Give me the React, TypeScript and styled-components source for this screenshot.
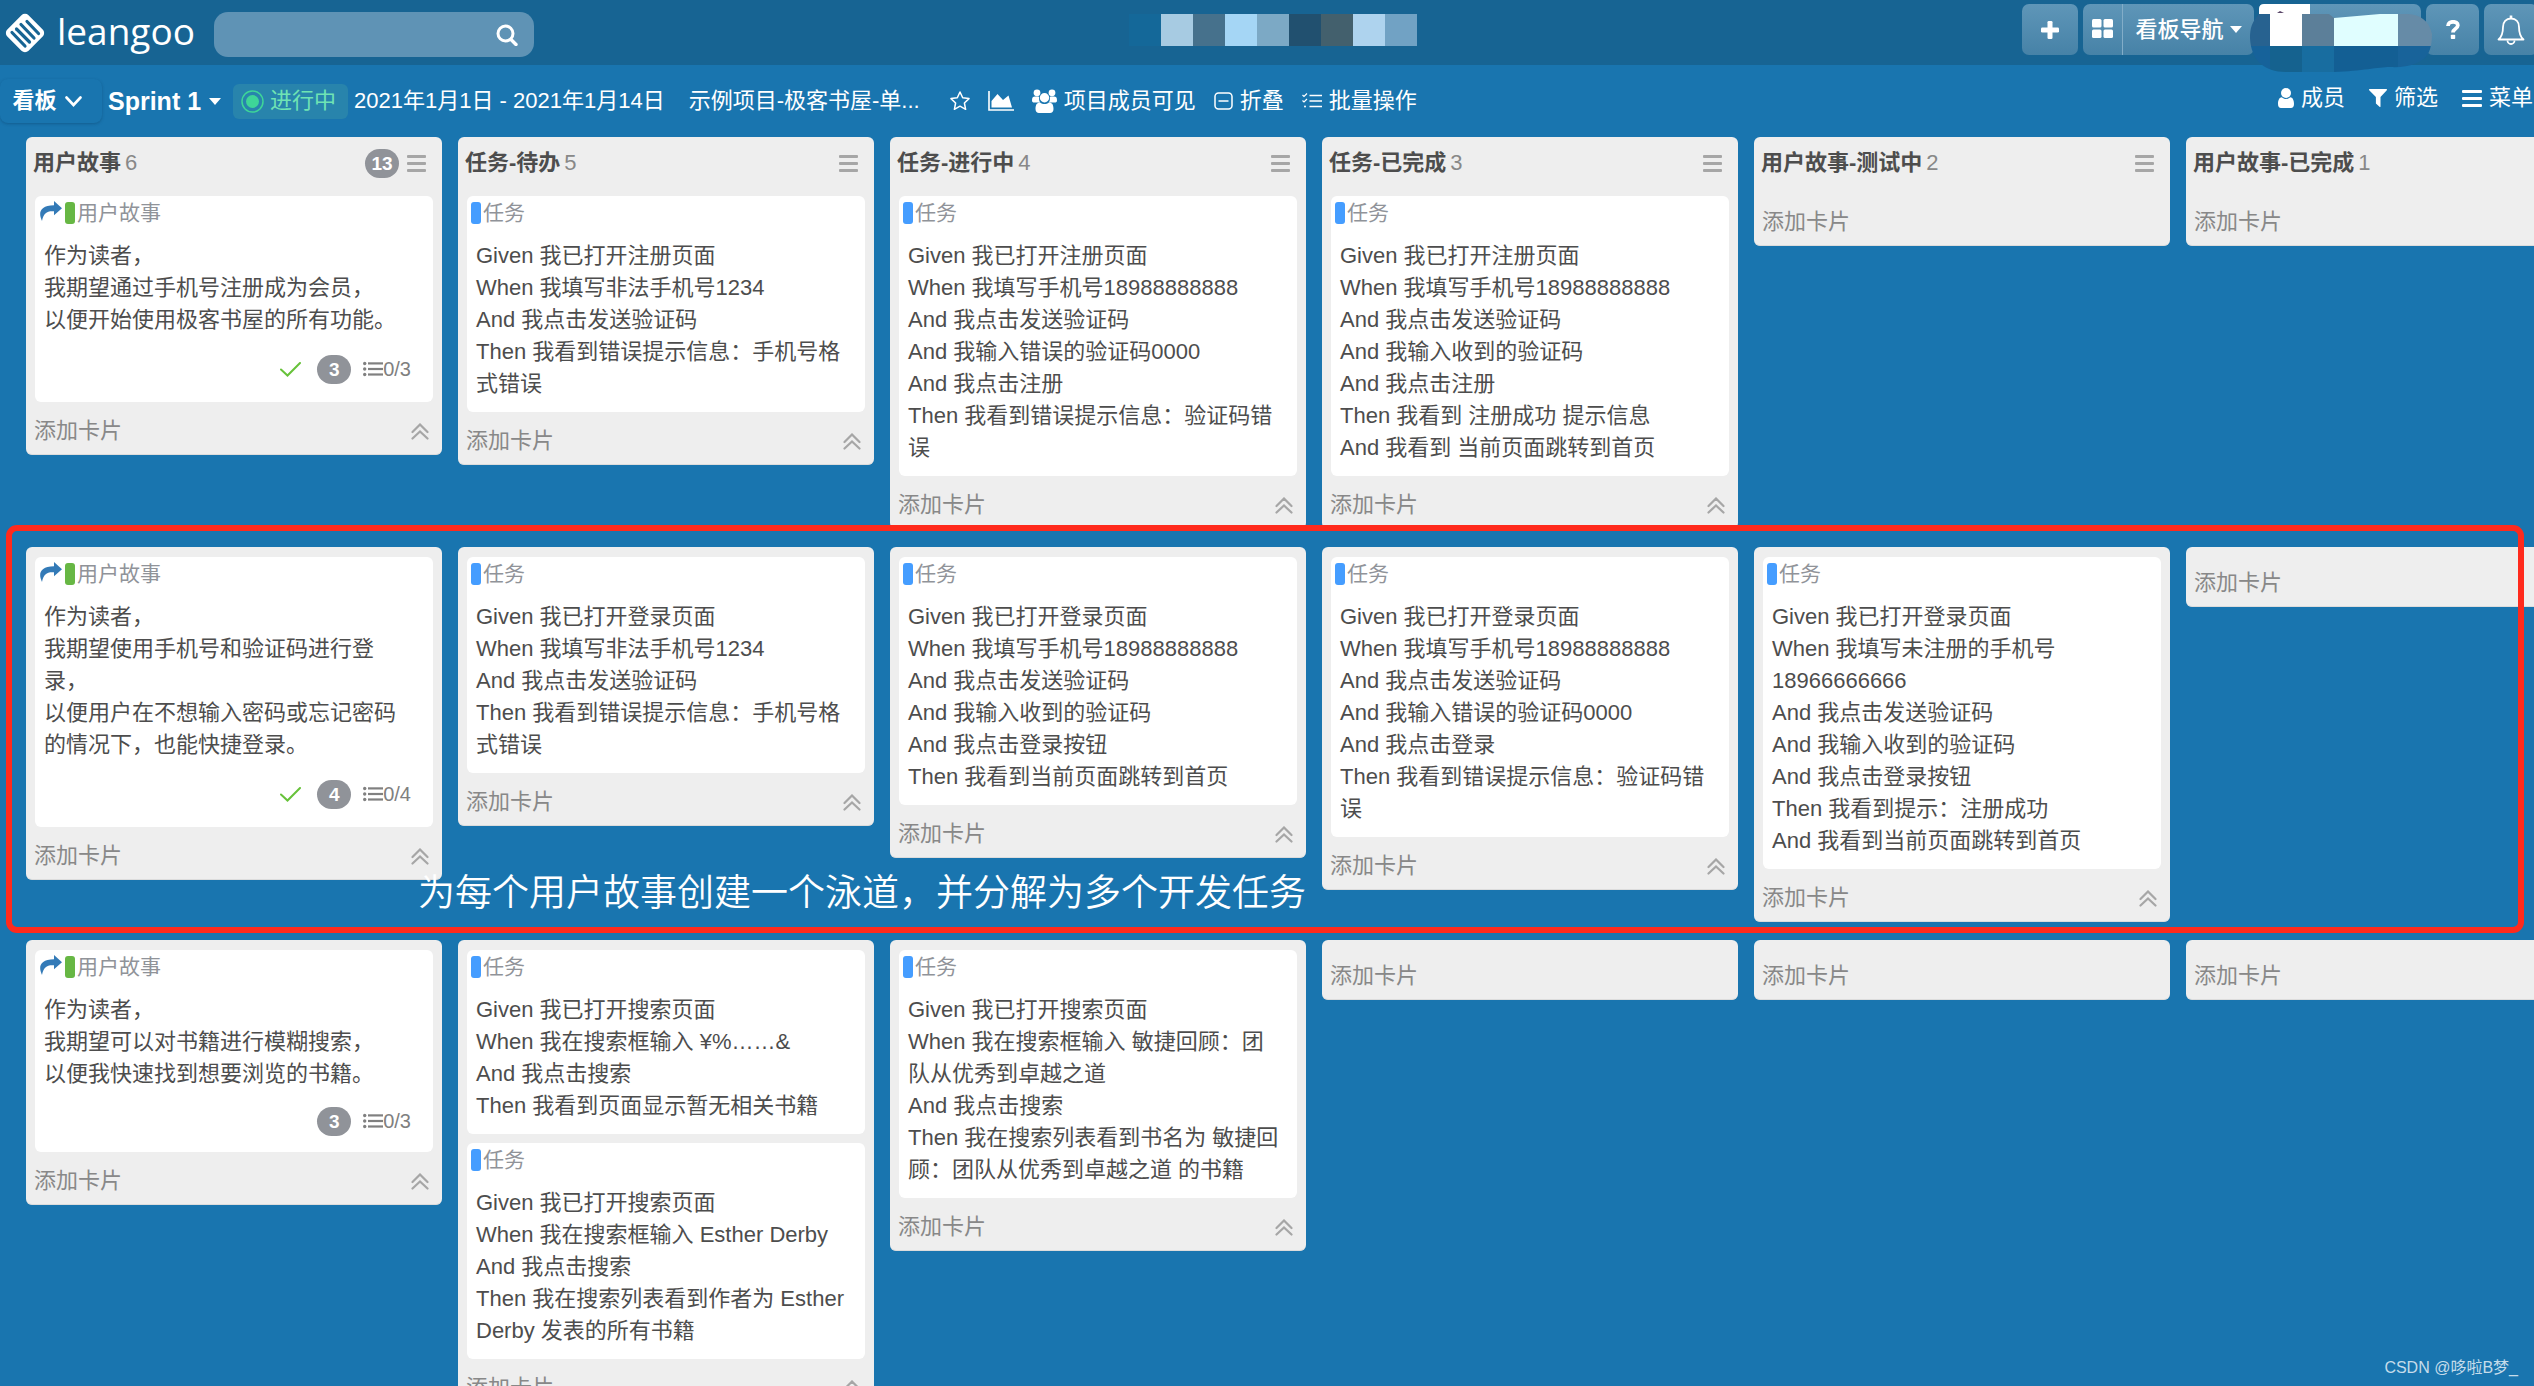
import React from "react";
import styled, { createGlobalStyle, css } from "styled-components";

const GlobalStyle = createGlobalStyle`
  *, *::before, *::after { box-sizing: border-box; }
  body {
    margin: 0;
    background: #1975af;
    font-family: "Liberation Sans", "Noto Sans CJK SC", sans-serif;
    font-size: 22px;
    line-height: 32px;
    color: #4d4d4d;
  }
  button, input { font: inherit; color: inherit; }
  button { border: 0; padding: 0; background: none; cursor: pointer; }
  h1, h2, p { margin: 0; font: inherit; }
  svg { display: block; flex: none; }
`;

const Page = styled.div`
  position: relative;
  height: 100vh;
  overflow: hidden;
  background: #1975af;
`;

/* ---------- top bar ---------- */

const TopBar = styled.header`
  display: grid;
  grid-template-columns: 1fr auto 1fr;
  height: 65px;
  background: #176493;
  color: #fff;
`;

const Brand = styled.div`
  display: flex;
  align-items: center;
  padding-left: 3px;
`;

const BrandLink = styled.a`
  display: flex;
  align-items: center;
  gap: 10px;
  width: 211px;
  color: #fff;
  text-decoration: none;
  font-family: "Open Sans", "Noto Sans", sans-serif;
  font-size: 37px;
  line-height: 56px;
`;

const BrandName = styled.span`
  padding-bottom: 4px;
`;

const SearchBox = styled.form`
  display: flex;
  align-items: center;
  width: 320px;
  height: 45px;
  margin-top: 4px;
  padding-right: 16px;
  border-radius: 14px;
  background: #5f93b5;
`;

const SearchInput = styled.input`
  flex: 1;
  min-width: 0;
  height: 45px;
  padding: 0 14px;
  border: 0;
  outline: 0;
  background: transparent;
`;

const Mosaic = styled.div`
  display: flex;
  height: 32px;
  margin-top: 14px;
  margin-left: 12px;
`;

const MosaicCell = styled.span<{ $color: string }>`
  width: 32px;
  background: ${(p) => p.$color};
`;

const TopActions = styled.nav`
  display: flex;
  justify-content: flex-end;
  gap: 5px;
  padding-top: 4px;
  margin-right: -4px;
`;

const TopButton = styled.button<{ $width: number }>`
  position: relative;
  display: flex;
  align-items: center;
  justify-content: center;
  width: ${(p) => p.$width}px;
  height: 51px;
  border-radius: 7px;
  background: linear-gradient(#5f96b8, #4682a7);
  color: #fff;
  font-weight: 500;
`;

const NavIcon = styled.span`
  display: flex;
  align-items: center;
  justify-content: center;
  width: 40px;
  height: 51px;
  padding-bottom: 3px;
  border-right: 1px solid #82adc8;
`;

const NavLabel = styled.span`
  display: flex;
  flex: 1;
  align-items: center;
  justify-content: center;
  gap: 6px;
`;

const UserMask = styled.svg`
  position: absolute;
  left: -9px;
  top: -4px;
  z-index: 1;
`;

/* ---------- board bar ---------- */

const BoardBar = styled.div`
  display: flex;
  justify-content: space-between;
  height: 72px;
  color: #fff;
  white-space: nowrap;
`;

const BarGroup = styled.div<{ $gap: number }>`
  display: flex;
  align-items: center;
  gap: ${(p) => p.$gap}px;
`;

const BoardSwitch = styled.button`
  display: flex;
  align-items: center;
  justify-content: center;
  gap: 8px;
  width: 102px;
  height: 44px;
  padding-right: 8px;
  border-radius: 8px;
  box-shadow: 0 1px 3px rgba(10, 60, 100, 0.4);
  font-weight: 700;
`;

const SprintSwitch = styled.button`
  display: flex;
  align-items: center;
  gap: 8px;
  padding-right: 6px;
  font-size: 25px;
  font-weight: 700;
`;

const StatusTag = styled.span`
  display: flex;
  align-items: center;
  gap: 6px;
  height: 35px;
  width: 115px;
  padding-left: 8px;
  border-radius: 6px;
  background: #2884ac;
  color: #6fe3b4;
`;

const ProjectName = styled.span`
  width: 243px;
`;

const BarButton = styled.button`
  display: flex;
  align-items: center;
  gap: 7px;
`;

const BarTools = styled(BarGroup)`
  height: 66px;
  margin-right: 1px;
`;

/* ---------- board ---------- */

const Board = styled.main`
  display: flex;
  flex-direction: column;
  gap: 18px;
`;

const Lane = styled.section`
  position: relative;
  display: flex;
  align-items: flex-start;
  gap: 16px;
  padding-left: 26px;
`;

const Column = styled.div<{ $headed: boolean }>`
  flex: 0 0 416px;
  padding-top: ${(p) => (p.$headed ? 0 : 7)}px;
  border-radius: 6px;
  border-bottom: 1px solid #dcdcdc;
  background: #eee;
`;

const ColumnHead = styled.div`
  display: flex;
  align-items: center;
  height: 56px;
  padding: 0 16px 4px 7px;
`;

const ColumnTitle = styled.h2`
  flex: 1;
  font-weight: 700;
`;

const ColumnCount = styled.span`
  margin-left: 4px;
  font-weight: 400;
  color: #888;
`;

const IconButton = styled.button`
  display: flex;
  color: #a6a6a6;
`;

const Pill = styled.span`
  width: 34px;
  height: 29px;
  border-radius: 15px;
  background: #909399;
  color: #fff;
  font-size: 19px;
  font-weight: 700;
  line-height: 29px;
  text-align: center;
`;

const HeadPill = styled(Pill)`
  margin-right: 8px;
`;

const MetaPill = styled(Pill)`
  margin-left: 16px;
`;

const CardList = styled.div`
  display: grid;
  gap: 9px;
  padding: 3px 9px 0;
`;

const Card = styled.article`
  border-radius: 6px;
  background: #fff;
`;

const CardHead = styled.div`
  display: flex;
  align-items: center;
  height: 44px;
  padding: 0 4px 10px;
  color: #909399;
  font-size: 21px;
`;

const TypeMark = styled.span<{ $story: boolean }>`
  width: 10px;
  height: 22px;
  margin-right: 2px;
  margin-left: ${(p) => (p.$story ? 3 : 0)}px;
  border-radius: 3px;
  background: ${(p) => (p.$story ? "#67b744" : "#459dff")};
`;

const CardText = styled.div<{ $last: boolean }>`
  padding: 0 17px 0 9px;
  ${(p) =>
    p.$last &&
    css`
      padding-bottom: 12px;
    `}
`;

const CardMeta = styled.div<{ $tall: boolean }>`
  display: flex;
  align-items: center;
  justify-content: flex-end;
  height: ${(p) => (p.$tall ? 66 : 62)}px;
  padding-right: 22px;
`;

const Checklist = styled.span`
  display: flex;
  align-items: center;
  margin-left: 12px;
  color: #808080;
  font-size: 20px;
`;

const ColumnFoot = styled.div`
  display: flex;
  align-items: center;
  justify-content: space-between;
  height: 52px;
  padding: 6px 13px 0 8px;
`;

const AddCard = styled.button`
  color: #888;
`;

/* ---------- annotations ---------- */

const Highlight = styled.div`
  position: absolute;
  inset: -22px 10px -11px 6px;
  border: 6px solid #ff2a1c;
  border-radius: 11px;
  pointer-events: none;
`;

const Caption = styled.p`
  position: absolute;
  left: 418px;
  bottom: 1px;
  color: #fff;
  font-size: 37px;
  font-weight: 350;
  line-height: 54px;
  white-space: nowrap;
`;

const Watermark = styled.p`
  position: absolute;
  right: 16px;
  bottom: 5px;
  color: rgba(255, 255, 255, 0.75);
  font-size: 16px;
  line-height: 26px;
`;

/* ---------- icons ---------- */

const LogoIcon = () => (
  <svg width="44" height="44" viewBox="0 0 44 44">
    <rect x="7" y="7" width="30" height="30" rx="5" fill="#fff" transform="rotate(45 22 22)" />
    <g stroke="#176493" strokeWidth="3.2" strokeLinecap="round">
      <path d="M9 21.500l13 13.500" />
      <path d="M13.500 18l13 13" />
      <path d="M18 13.500l13 13.500" />
      <path d="M24 10.500l11.500 12" />
    </g>
  </svg>
);

const SearchIcon = () => (
  <svg width="22" height="22" viewBox="0 0 22 22" fill="none" stroke="#fff" strokeLinecap="round">
    <circle cx="9.500" cy="9.500" r="7.500" strokeWidth="3" />
    <path d="M15 15.500l5 5" strokeWidth="3.400" />
  </svg>
);

const Caret = () => (
  <svg width="12" height="7" viewBox="0 0 12 7">
    <path d="M0 0h12L6 7z" fill="#fff" />
  </svg>
);

const ChevronDown = () => (
  <svg width="17" height="11" viewBox="0 0 17 11" fill="none" stroke="#fff" strokeWidth="2.600" strokeLinecap="round">
    <path d="M1.500 1.500l7 7.500 7-7.500" />
  </svg>
);

const PlusIcon = () => (
  <svg width="18" height="18" viewBox="0 0 18 18" fill="#fff">
    <rect x="6.500" width="5" height="18" rx="1.300" />
    <rect y="6.500" width="18" height="5" rx="1.300" />
  </svg>
);

const GridIcon = () => (
  <svg width="21" height="19" viewBox="0 0 21 19" fill="#fff">
    <rect width="9.500" height="8.500" rx="1.500" />
    <rect x="11.500" width="9.500" height="8.500" rx="1.500" />
    <rect y="10.500" width="9.500" height="8.500" rx="1.500" />
    <rect x="11.500" y="10.500" width="9.500" height="8.500" rx="1.500" />
  </svg>
);

const HelpIcon = () => (
  <svg width="14" height="19" viewBox="0 0 14 19">
    <path d="M2 6C2 0.500 12 0.500 11.800 5.500C11.600 9 7 8.500 7 12.500" fill="none" stroke="#fff" strokeWidth="3.800" />
    <rect x="4.800" y="14.800" width="4.400" height="4.200" rx="0.800" fill="#fff" />
  </svg>
);

const BellIcon = () => (
  <svg width="28" height="30" viewBox="0 0 28 30" fill="none" stroke="#fff" strokeWidth="1.800" strokeLinejoin="round">
    <path d="M14 3.500c-5 0-8 3.500-8 8.500 0 7-1.500 10-4.500 12.500h25C23.500 22 22 19 22 12c0-5-3-8.500-8-8.500z" />
    <path d="M14 0.500v3" strokeWidth="2.600" />
    <path d="M10.500 25.500a3.500 3.500 0 007 0" />
  </svg>
);

const ProgressIcon = () => (
  <svg width="23" height="23" viewBox="0 0 23 23">
    <circle cx="11.500" cy="11.500" r="10.500" fill="none" stroke="#3ed598" strokeWidth="1.500" />
    <circle cx="11.500" cy="11.500" r="6.500" fill="#3ed598" />
  </svg>
);

const StarIcon = () => (
  <svg width="20" height="20" viewBox="0 0 20 20" fill="none" stroke="#fff" strokeWidth="1.500" strokeLinejoin="round">
    <path d="M10 1l2.700 5.800 6.300.8-4.600 4.400 1.200 6.300L10 15.200l-5.600 3.100L5.600 12 1 7.600l6.300-.8z" />
  </svg>
);

const ChartIcon = () => (
  <svg width="26" height="20" viewBox="0 0 26 20">
    <path d="M1 0v19h25" fill="none" stroke="#fff" strokeWidth="1.600" />
    <path d="M3.500 16.500V10L9.500 3l5.500 6 5.500-4.500 3.500 12z" fill="#fff" />
  </svg>
);

const UsersIcon = () => (
  <svg width="25" height="24" viewBox="0 0 25 24" fill="#fff">
    <circle cx="5" cy="3.800" r="3.400" />
    <circle cx="20" cy="3.800" r="3.400" />
    <path d="M0 11.500C0 8.500 1 7.600 3 7.600h3c1 0 1.200.6 1.100 1.600-.1 2 .3 3 1.300 4.400H2.500C.8 13.600 0 13 0 11.500z" />
    <path d="M25 11.500c0-3-1-3.900-3-3.900h-3c-1 0-1.200.6-1.100 1.600.1 2-.3 3-1.300 4.400h5.900c1.700 0 2.500-.6 2.500-2.100z" />
    <circle cx="12.500" cy="8.800" r="4.700" />
    <path d="M3.500 20c0-4.500 1.500-6.600 4.500-6.600 1.500 1.200 3 1.600 4.500 1.600s3-.4 4.500-1.600c3 0 4.500 2.100 4.500 6.600 0 2.600-1.500 4-3.500 4H7c-2 0-3.500-1.400-3.500-4z" />
  </svg>
);

const FoldIcon = () => (
  <svg width="19" height="18" viewBox="0 0 19 18" fill="none" stroke="#fff" strokeWidth="1.500">
    <rect x="1" y="1" width="17" height="16" rx="3.500" />
    <path d="M4.500 9h10" />
  </svg>
);

const BatchIcon = () => (
  <svg width="20" height="16" viewBox="0 0 20 16" fill="none" stroke="#fff" strokeWidth="1.500">
    <path d="M7.500 2.500H20M7.500 8H20M7.500 13.500H20" />
    <path d="M0.500 2l1.500 1.500L5 .5M0.500 7.500L2 9l3-3" strokeWidth="1.200" />
    <circle cx="3" cy="13.500" r="1" fill="#fff" stroke="none" />
  </svg>
);

const UserIcon = () => (
  <svg width="16" height="20" viewBox="0 0 16 20" fill="#fff">
    <circle cx="8" cy="5" r="5" />
    <path d="M0 16c0-4 1.400-6.800 3.800-6.800C5 10.300 6.500 11 8 11s3-.7 4.200-1.800C14.600 9.200 16 12 16 16c0 2.500-1.200 4-3 4H3c-1.800 0-3-1.500-3-4z" />
  </svg>
);

const FilterIcon = () => (
  <svg width="18" height="18" viewBox="0 0 18 18">
    <path d="M.6 0h16.800c.6 0 .8.800.4 1.200L11.500 8v9.400c0 .5-.6.800-1 .4l-3.600-3.200V8L.2 1.200C-.2.800 0 0 .6 0z" fill="#fff" />
  </svg>
);

const MenuIcon = ({ size = 20 }: { size?: number }) => (
  <svg width={size} height="17" viewBox="0 0 20 17" preserveAspectRatio="none" fill="currentColor">
    <rect width="20" height="3" rx="1" />
    <rect y="7" width="20" height="3" rx="1" />
    <rect y="14" width="20" height="3" rx="1" />
  </svg>
);

const ShareIcon = () => (
  <svg width="23" height="24" viewBox="0 0 23 24">
    <path d="M15 0l8 7.200-8 7V10.300C8 9.800 4.500 12 3 20-.8 12 0.500 4.500 15 4.200z" fill="#337ab7" />
  </svg>
);

const CheckIcon = () => (
  <svg width="21" height="15" viewBox="0 0 21 15" fill="none" stroke="#67c23a" strokeWidth="2" strokeLinecap="round">
    <path d="M1 7.500l6.500 6L20 1" />
  </svg>
);

const ListIcon = () => (
  <svg width="20" height="16" viewBox="0 0 20 16" fill="#808080">
    <circle cx="1.700" cy="2.500" r="1.700" />
    <circle cx="1.700" cy="8" r="1.700" />
    <circle cx="1.700" cy="13.500" r="1.700" />
    <rect x="5" y="1.300" width="15" height="2.200" />
    <rect x="5" y="6.900" width="15" height="2.200" />
    <rect x="5" y="12.400" width="15" height="2.200" />
  </svg>
);

const FoldUpIcon = () => (
  <svg width="18" height="17" viewBox="0 0 18 17" fill="none" stroke="#a6a6a6" strokeWidth="2.200" strokeLinecap="round">
    <path d="M1.500 9L9 1.500 16.500 9M1.500 15.500L9 8.500l7.500 7" />
  </svg>
);

const MaskDrawing = () => (
  <UserMask width="182" height="73" viewBox="0 0 182 73" aria-hidden="true">
    <defs>
      <clipPath id="mask-shape">
        <path d="M9 14C2 22 0 28 0 38C1 60 14 72 36 72H84C112 71 128 67 140 67C158 68 172 63 178 54C181 48 182 42 182 34C179 20 170 15 158 14H130L84 18L79 14Z" />
      </clipPath>
    </defs>
    <path d="M9 9q0-5 5-5h46v10H9z" fill="#fff" />
    <g clipPath="url(#mask-shape)">
      <rect width="20" height="46" fill="#276290" />
      <rect x="20" width="32" height="46" fill="#fff" />
      <rect x="52" width="32" height="46" fill="#5c7f99" />
      <rect x="84" width="64" height="46" fill="#e0feff" />
      <rect x="148" width="34" height="46" fill="#668ba7" />
      <rect y="46" width="20" height="27" fill="#16629a" />
      <rect x="20" y="46" width="32" height="27" fill="#15628f" />
      <rect x="52" y="46" width="32" height="27" fill="#186da0" />
      <rect x="84" y="46" width="64" height="27" fill="#135f94" />
      <rect x="148" y="46" width="34" height="27" fill="#18639a" />
    </g>
    <path d="M27 13l3-2 4 2z" fill="#5a4668" />
  </UserMask>
);

/* ---------- data ---------- */

type CardData = {
  kind: "story" | "task";
  lines: string[];
  points?: number;
  checks?: string;
  done?: boolean;
};

type ColumnData = { title?: string; count?: number; total?: number; cards: CardData[] };

const task = (...lines: string[]): CardData => ({ kind: "task", lines });

const lanes: ColumnData[][] = [
  [
    {
      title: "用户故事",
      count: 6,
      total: 13,
      cards: [
        {
          kind: "story",
          lines: ["作为读者，", "我期望通过手机号注册成为会员，", "以便开始使用极客书屋的所有功能。"],
          points: 3,
          checks: "0/3",
          done: true,
        },
      ],
    },
    {
      title: "任务-待办",
      count: 5,
      cards: [
        task("Given 我已打开注册页面", "When 我填写非法手机号1234", "And 我点击发送验证码", "Then 我看到错误提示信息：手机号格式错误"),
      ],
    },
    {
      title: "任务-进行中",
      count: 4,
      cards: [
        task(
          "Given 我已打开注册页面",
          "When 我填写手机号18988888888",
          "And 我点击发送验证码",
          "And 我输入错误的验证码0000",
          "And 我点击注册",
          "Then 我看到错误提示信息：验证码错误"
        ),
      ],
    },
    {
      title: "任务-已完成",
      count: 3,
      cards: [
        task(
          "Given 我已打开注册页面",
          "When 我填写手机号18988888888",
          "And 我点击发送验证码",
          "And 我输入收到的验证码",
          "And 我点击注册",
          "Then 我看到 注册成功 提示信息",
          "And 我看到 当前页面跳转到首页"
        ),
      ],
    },
    { title: "用户故事-测试中", count: 2, cards: [] },
    { title: "用户故事-已完成", count: 1, cards: [] },
  ],
  [
    {
      cards: [
        {
          kind: "story",
          lines: ["作为读者，", "我期望使用手机号和验证码进行登录，", "以便用户在不想输入密码或忘记密码的情况下，也能快捷登录。"],
          points: 4,
          checks: "0/4",
          done: true,
        },
      ],
    },
    {
      cards: [
        task("Given 我已打开登录页面", "When 我填写非法手机号1234", "And 我点击发送验证码", "Then 我看到错误提示信息：手机号格式错误"),
      ],
    },
    {
      cards: [
        task(
          "Given 我已打开登录页面",
          "When 我填写手机号18988888888",
          "And 我点击发送验证码",
          "And 我输入收到的验证码",
          "And 我点击登录按钮",
          "Then 我看到当前页面跳转到首页"
        ),
      ],
    },
    {
      cards: [
        task(
          "Given 我已打开登录页面",
          "When 我填写手机号18988888888",
          "And 我点击发送验证码",
          "And 我输入错误的验证码0000",
          "And 我点击登录",
          "Then 我看到错误提示信息：验证码错误"
        ),
      ],
    },
    {
      cards: [
        task(
          "Given 我已打开登录页面",
          "When 我填写未注册的手机号18966666666",
          "And 我点击发送验证码",
          "And 我输入收到的验证码",
          "And 我点击登录按钮",
          "Then 我看到提示：注册成功",
          "And 我看到当前页面跳转到首页"
        ),
      ],
    },
    { cards: [] },
  ],
  [
    {
      cards: [
        {
          kind: "story",
          lines: ["作为读者，", "我期望可以对书籍进行模糊搜索，", "以便我快速找到想要浏览的书籍。"],
          points: 3,
          checks: "0/3",
        },
      ],
    },
    {
      cards: [
        task("Given 我已打开搜索页面", "When 我在搜索框输入 ¥%……&", "And 我点击搜索", "Then 我看到页面显示暂无相关书籍"),
        task(
          "Given 我已打开搜索页面",
          "When 我在搜索框输入 Esther Derby",
          "And 我点击搜索",
          "Then 我在搜索列表看到作者为 Esther Derby 发表的所有书籍"
        ),
      ],
    },
    {
      cards: [
        task(
          "Given 我已打开搜索页面",
          "When 我在搜索框输入 敏捷回顾：团队从优秀到卓越之道",
          "And 我点击搜索",
          "Then 我在搜索列表看到书名为 敏捷回顾：团队从优秀到卓越之道 的书籍"
        ),
      ],
    },
    { cards: [] },
    { cards: [] },
    { cards: [] },
  ],
];

const mosaicColors = ["#146899", "#a7cbe2", "#46718c", "#a5d6f5", "#7ca9c5", "#21506f", "#43606d", "#aed3ee", "#71a2c4"];

/* ---------- parts ---------- */

function BoardCard({ card }: { card: CardData }) {
  const story = card.kind === "story";
  return (
    <Card>
      <CardHead>
        {story && <ShareIcon />}
        <TypeMark $story={story} />
        {story ? "用户故事" : "任务"}
      </CardHead>
      <CardText $last={!card.checks}>
        {card.lines.map((line) => (
          <p key={line}>{line}</p>
        ))}
      </CardText>
      {card.checks && (
        <CardMeta $tall={!!card.done}>
          {card.done && <CheckIcon />}
          <MetaPill>{card.points}</MetaPill>
          <Checklist>
            <ListIcon />
            {card.checks}
          </Checklist>
        </CardMeta>
      )}
    </Card>
  );
}

function BoardColumn({ column }: { column: ColumnData }) {
  const hasCards = column.cards.length > 0;
  return (
    <Column $headed={!!column.title}>
      {column.title && (
        <ColumnHead>
          <ColumnTitle>
            {column.title}
            <ColumnCount>{column.count}</ColumnCount>
          </ColumnTitle>
          {column.total && <HeadPill>{column.total}</HeadPill>}
          <IconButton aria-label="列表菜单">
            <MenuIcon size={19} />
          </IconButton>
        </ColumnHead>
      )}
      {hasCards && (
        <CardList>
          {column.cards.map((card, i) => (
            <BoardCard key={i} card={card} />
          ))}
        </CardList>
      )}
      <ColumnFoot>
        <AddCard>添加卡片</AddCard>
        {hasCards && (
          <IconButton aria-label="收起">
            <FoldUpIcon />
          </IconButton>
        )}
      </ColumnFoot>
    </Column>
  );
}

export default function App() {
  return (
    <Page>
      <GlobalStyle />
      <TopBar>
        <Brand>
          <BrandLink href="#">
            <LogoIcon />
            <BrandName>leangoo</BrandName>
          </BrandLink>
          <SearchBox role="search">
            <SearchInput type="text" aria-label="搜索" />
            <IconButton type="button" aria-label="搜索">
              <SearchIcon />
            </IconButton>
          </SearchBox>
        </Brand>
        <Mosaic aria-hidden="true">
          {mosaicColors.map((color) => (
            <MosaicCell key={color} $color={color} />
          ))}
        </Mosaic>
        <TopActions>
          <TopButton $width={56} aria-label="新建">
            <PlusIcon />
          </TopButton>
          <TopButton $width={171}>
            <NavIcon>
              <GridIcon />
            </NavIcon>
            <NavLabel>
              看板导航
              <Caret />
            </NavLabel>
          </TopButton>
          <TopButton $width={162} aria-label="账号">
            <MaskDrawing />
          </TopButton>
          <TopButton $width={53} aria-label="帮助">
            <HelpIcon />
          </TopButton>
          <TopButton $width={54} aria-label="通知">
            <BellIcon />
          </TopButton>
        </TopActions>
      </TopBar>

      <BoardBar>
        <BarGroup $gap={24}>
          <BarGroup $gap={6}>
            <BoardSwitch>
              看板
              <ChevronDown />
            </BoardSwitch>
            <SprintSwitch>
              Sprint 1
              <Caret />
            </SprintSwitch>
            <StatusTag>
              <ProgressIcon />
              进行中
            </StatusTag>
            <span>2021年1月1日 - 2021年1月14日</span>
          </BarGroup>
          <BarGroup $gap={18}>
            <ProjectName>示例项目-极客书屋-单...</ProjectName>
            <IconButton aria-label="收藏">
              <StarIcon />
            </IconButton>
            <IconButton aria-label="统计">
              <ChartIcon />
            </IconButton>
            <BarButton>
              <UsersIcon />
              项目成员可见
            </BarButton>
            <BarButton>
              <FoldIcon />
              折叠
            </BarButton>
            <BarButton>
              <BatchIcon />
              批量操作
            </BarButton>
          </BarGroup>
        </BarGroup>
        <BarTools $gap={24}>
          <BarButton>
            <UserIcon />
            成员
          </BarButton>
          <BarButton>
            <FilterIcon />
            筛选
          </BarButton>
          <BarButton>
            <MenuIcon />
            菜单
          </BarButton>
        </BarTools>
      </BoardBar>

      <Board>
        {lanes.map((columns, laneIndex) => (
          <Lane key={laneIndex}>
            {columns.map((column, i) => (
              <BoardColumn key={i} column={column} />
            ))}
            {laneIndex === 1 && (
              <>
                <Highlight />
                <Caption>为每个用户故事创建一个泳道，并分解为多个开发任务</Caption>
              </>
            )}
          </Lane>
        ))}
      </Board>

      <Watermark>CSDN @哆啦B梦_</Watermark>
    </Page>
  );
}
